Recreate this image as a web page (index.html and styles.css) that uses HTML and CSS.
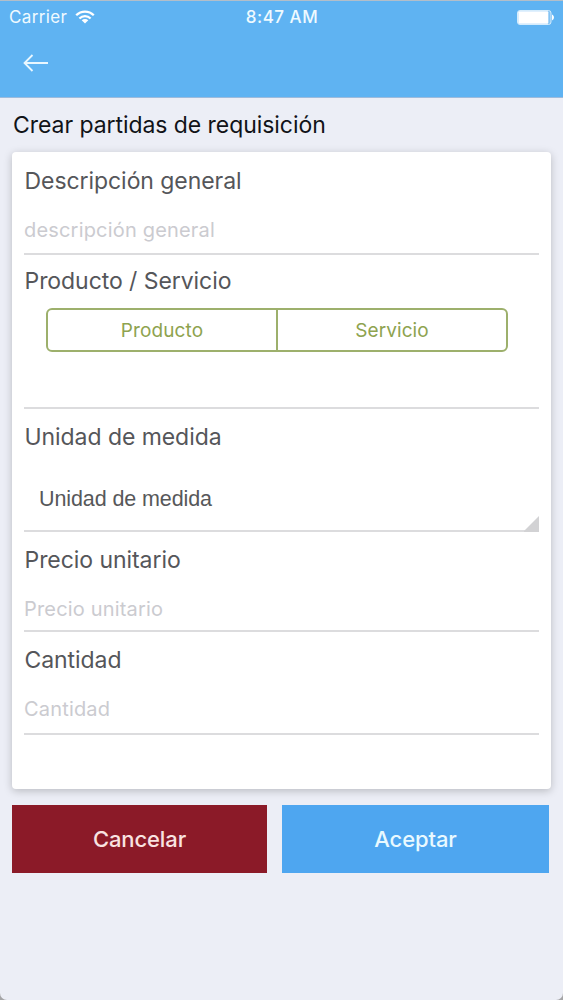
FILE: index.html
```html
<!DOCTYPE html>
<html lang="es">
<head>
    <meta charset="UTF-8">
    <meta name="viewport" content="width=device-width, initial-scale=1.0">
    <title>Crear partidas de requisición</title>
    <link rel="stylesheet" href="styles.css">
</head>
<body>
  <div class="screen">
    <header class="header">
      <div class="status">
        <div class="carrier">
          <span>Carrier</span>
          <svg width="20" height="14" viewBox="0 0 20 14" fill="none" stroke="#fff" stroke-width="2.3">
            <path d="M1.2 5.2C6.2 .3 13.8 .3 18.8 5.2"/>
            <path d="M4.4 8.5C7.6 5.4 12.4 5.4 15.6 8.5"/>
            <path d="M10 13.6L6.7 10.3C8.6 8.6 11.4 8.6 13.3 10.3Z" fill="#fff" stroke="none"/>
          </svg>
        </div>
        <span class="clock">8:47 AM</span>
        <svg class="battery" width="38" height="15" viewBox="0 0 38 15">
          <rect x=".5" y=".5" width="33.5" height="14" rx="2.5" fill="#84c3f4" stroke="#d5ecfc"/>
          <rect x="1.3" y="1.3" width="30" height="12.4" rx="1" fill="#fff"/>
          <path d="M35 4.6C37.6 5.5 37.6 9.5 35 10.4Z" fill="#fff"/>
        </svg>
      </div>
      <a href="#" class="back">
        <svg width="26" height="18" viewBox="0 0 26 18" fill="none" stroke="#e9f7ff" stroke-width="1.8">
          <path d="M25 9H1.5M9.5 1L1.5 9L9.5 17"/>
        </svg>
      </a>
    </header>

    <h1 class="title">Crear partidas de requisición</h1>

    <form class="card">
      <div class="field field_description">
        <label class="label">Descripción general</label>
        <div class="placeholder">descripción general</div>
      </div>
      <div class="field field_type">
        <label class="label">Producto / Servicio</label>
        <div class="segment">
          <span class="option">Producto</span>
          <span class="option">Servicio</span>
        </div>
      </div>
      <div class="field field_unit">
        <label class="label">Unidad de medida</label>
        <div class="select">Unidad de medida</div>
        <svg class="corner" width="15" height="16" viewBox="0 0 15 16"><path d="M15 0V16H0V15Z" fill="#d2d2d4"/></svg>
      </div>
      <div class="field field_price">
        <label class="label">Precio unitario</label>
        <div class="placeholder">Precio unitario</div>
      </div>
      <div class="field field_amount">
        <label class="label">Cantidad</label>
        <div class="placeholder">Cantidad</div>
      </div>
    </form>

    <div class="buttons">
      <button type="button" class="button cancel">Cancelar</button>
      <button type="button" class="button accept">Aceptar</button>
    </div>
  </div>
</body>
</html>
```
FILE: styles.css
```css
*{
    margin: 0;
    padding: 0;
    box-sizing: border-box;
}
body{
    background-color: #a5a5a7;
    font-family: Inter, Roboto, "Liberation Sans", sans-serif;
}
.screen{
    height: 1000px;
    background-color: #eceef6;
    border-radius: 0 0 7px 7px;
    overflow: hidden;
}
.header{
    height: 98px;
    background-color: #5fb3f2;
    border-top: 1px solid #b3bec9;
    border-bottom: 1px solid #9dbbdc;
}
.status{
    display: grid;
    grid-template-columns: 1fr auto 1fr;
    align-items: center;
    height: 32px;
    padding: 0 8px 0 9px;
    color: #effaff;
    font-size: 17px;
}
.carrier{
    display: flex;
    align-items: center;
    gap: 8px;
    letter-spacing: .35px;
}
.clock{
    font-weight: 500;
    letter-spacing: .5px;
}
.battery{
    justify-self: end;
}
.back{
    display: flex;
    width: 26px;
    margin: 21px 0 0 23px;
}
.title{
    height: 54px;
    padding: 12px 13px 0;
    font-size: 23px;
    line-height: 30px;
    font-weight: 400;
    letter-spacing: -.06px;
    color: #111318;
}
.card{
    height: 637px;
    margin: 0 12px;
    padding: 0 12px;
    background-color: #fff;
    border-radius: 4px;
    box-shadow: 0 2px 8px rgba(0, 0, 0, .22);
}
.field{
    display: flex;
    flex-direction: column;
    padding-top: 13px;
    border-bottom: 2px solid #dcdcde;
}
.field_description{
    height: 103px;
    padding-top: 14px;
}
.field_type{
    height: 154px;
    padding-top: 11px;
}
.field_unit{
    height: 123px;
}
.field_price{
    height: 100px;
}
.field_amount{
    height: 103px;
}
.label{
    align-self: flex-start;
    padding-left: .5px;
    font-size: 23px;
    line-height: 30px;
    letter-spacing: -.06px;
    color: #55565a;
}
.placeholder{
    align-self: flex-start;
    margin-top: 21px;
    font-size: 20px;
    line-height: 26px;
    letter-spacing: .18px;
    color: #cbcbd0;
}
.segment{
    display: flex;
    height: 44px;
    margin: 12px 31px 0 22px;
    border: 2px solid #9db06c;
    border-radius: 6px;
}
.option{
    flex: 1;
    font-size: 19px;
    line-height: 41px;
    text-align: center;
    letter-spacing: .1px;
    color: #8ea34f;
}
.option + .option{
    border-left: 2px solid #9db06c;
}
.select{
    margin: 34px 0 0 15px;
    font-family: "Liberation Sans", Arial, sans-serif;
    font-size: 21.5px;
    line-height: 26px;
    letter-spacing: -.1px;
    color: #57585a;
}
.corner{
    align-self: flex-end;
    flex: none;
    margin-top: 4px;
}
.buttons{
    display: grid;
    grid-template-columns: 255px 267px;
    gap: 15px;
    margin: 16px 12px 0;
}
.button{
    height: 68px;
    border: none;
    font-family: inherit;
    font-size: 22px;
    font-weight: 500;
    letter-spacing: -.1px;
}
.cancel{
    background-color: #8b1a28;
    color: #f9e3e1;
}
.accept{
    background-color: #4ea6f0;
    color: #e9f9ff;
}
```
